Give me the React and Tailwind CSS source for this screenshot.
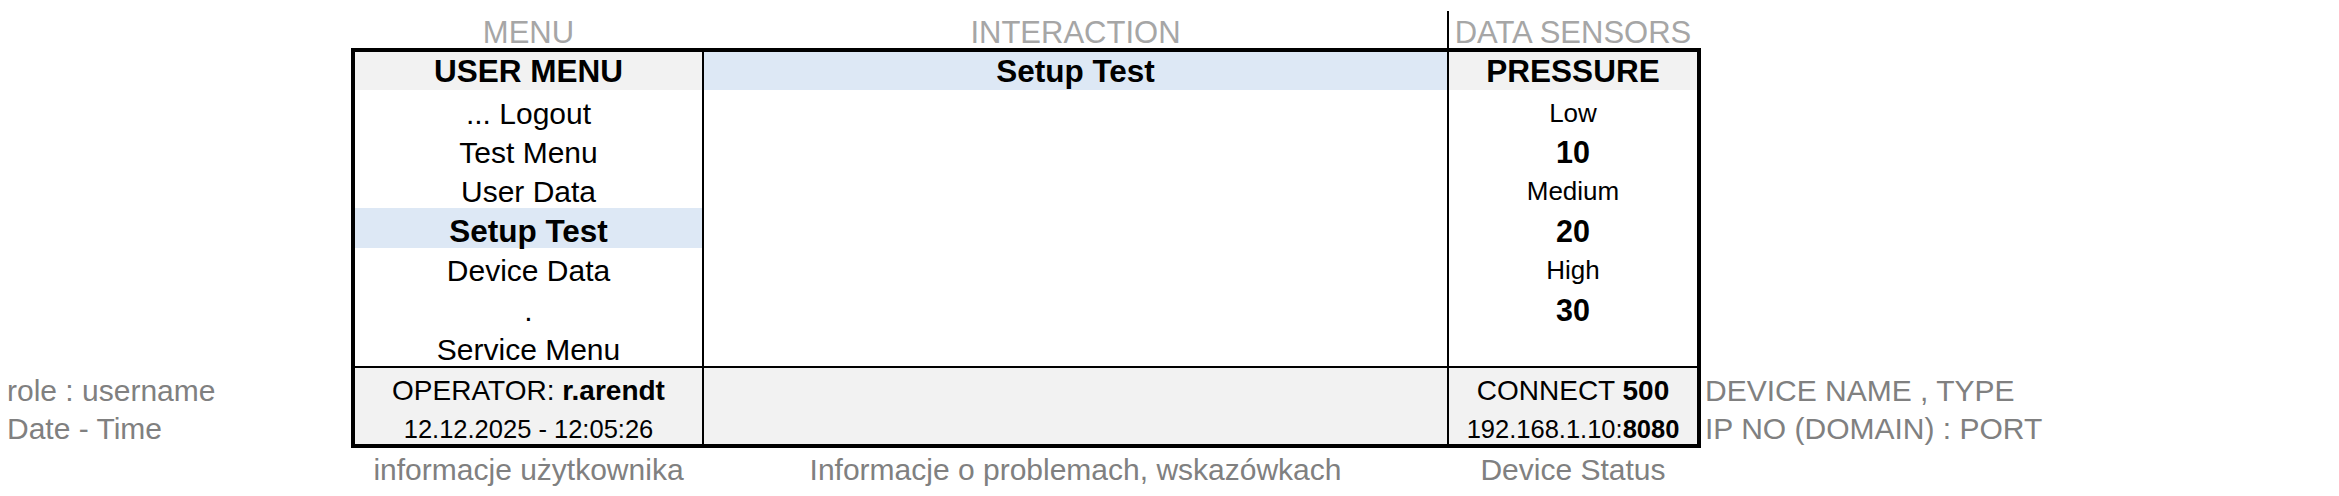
import React from 'react';

const menuItems = [
    { label: '... Logout' },
    { label: 'Test Menu' },
    { label: 'User Data' },
    { label: 'Setup Test', active: true },
    { label: 'Device Data' },
    { label: '.' },
    { label: 'Service Menu' },
];

// pressure levels, label rows are set smaller than the values
const sensorRows = [
    { text: 'Low', small: true },
    { text: '10' },
    { text: 'Medium', small: true },
    { text: '20' },
    { text: 'High', small: true },
    { text: '30' },
    { text: '' },
];

// cell text sits a little low in its row, like a spreadsheet cell
const Row = ({ children, className = '' }) => (
    <div className={`h-[39.43px] pt-[3.5px] leading-[39px] text-center whitespace-nowrap ${className}`}>{children}</div>
);

const FootRow = ({ children, className = '' }) => (
    <div className={`h-[38px] pt-[4px] leading-[38px] text-center whitespace-nowrap ${className}`}>{children}</div>
);

const SideLabel = ({ children }) => (
    <div className="h-[38px] pt-[3.5px] leading-[38px] text-[30px] text-[#808080] whitespace-nowrap">{children}</div>
);

const App = () => {
    return (
        <div className="w-[2339px] h-[496px] bg-white flex font-['Liberation_Sans',Arial,sans-serif] text-black overflow-hidden">
            {/* Left notes */}
            <div className="w-[351px] shrink-0 pt-[368px] pl-[7px]">
                <SideLabel>role : username</SideLabel>
                <SideLabel>Date - Time</SideLabel>
            </div>

            {/* Main block */}
            <div className="w-[1350px] shrink-0 flex flex-col">
                {/* Section titles */}
                <div className="h-[48px] flex items-end pl-[4px] text-[31px] text-[#a6a6a6]">
                    <div className="w-[347px] text-center leading-[30px]">MENU</div>
                    <div className="w-[745px] pl-[2px] text-center leading-[30px]">INTERACTION</div>
                    <div className="w-[250px] h-[37px] border-l-2 border-black flex items-end justify-center">
                        <span className="leading-[30px] whitespace-nowrap">DATA SENSORS</span>
                    </div>
                </div>

                {/* Panel */}
                <div className="border-4 border-black flex">
                    {/* Menu column */}
                    <div className="w-[347px] flex flex-col">
                        <div className="h-[38px] leading-[38px] text-center bg-[#f2f2f2] font-bold text-[31.5px]">USER MENU</div>
                        {menuItems.map((item) => (
                            <Row
                                key={item.label}
                                className={item.active ? 'bg-[#dde8f5] font-bold text-[31.5px]' : 'text-[30px]'}
                            >
                                {item.label}
                            </Row>
                        ))}
                        <div className="border-t-2 border-black bg-[#f2f2f2]">
                            <FootRow className="text-[28px]">
                                OPERATOR: <span className="font-bold">r.arendt</span>
                            </FootRow>
                            <FootRow className="text-[25.5px]">12.12.2025 - 12:05:26</FootRow>
                        </div>
                    </div>

                    {/* Interaction column */}
                    <div className="w-[745px] border-l-2 border-black flex flex-col">
                        <div className="h-[38px] leading-[38px] text-center bg-[#dde8f5] font-bold text-[31.5px]">Setup Test</div>
                        <div className="h-[276px]" />
                        <div className="border-t-2 border-black bg-[#f2f2f2] h-[78px]" />
                    </div>

                    {/* Sensors column */}
                    <div className="w-[250px] border-l-2 border-black flex flex-col">
                        <div className="h-[38px] leading-[38px] text-center bg-[#f2f2f2] font-bold text-[31.5px]">PRESSURE</div>
                        {sensorRows.map((r, i) => (
                            <Row key={i} className={r.small ? 'text-[26px]' : 'text-[30.5px] font-bold'}>
                                {r.text}
                            </Row>
                        ))}
                        <div className="border-t-2 border-black bg-[#f2f2f2]">
                            <FootRow className="text-[28px]">
                                CONNECT <span className="font-bold">500</span>
                            </FootRow>
                            <FootRow className="text-[25.5px]">
                                192.168.1.10:<span className="font-bold">8080</span>
                            </FootRow>
                        </div>
                    </div>
                </div>

                {/* Captions */}
                <div className="flex pl-[4px] pt-[2px] text-[30px] text-[#808080]">
                    <div className="w-[347px] text-center leading-[39px] whitespace-nowrap">informacje użytkownika</div>
                    <div className="w-[745px] pl-[2px] text-center leading-[39px] whitespace-nowrap">
                        Informacje o problemach, wskazówkach
                    </div>
                    <div className="w-[250px] pl-[2px] text-center leading-[39px] whitespace-nowrap">Device Status</div>
                </div>
            </div>

            {/* Right notes */}
            <div className="pt-[368px] pl-[4px]">
                <SideLabel>DEVICE NAME , TYPE</SideLabel>
                <SideLabel>IP NO (DOMAIN) : PORT</SideLabel>
            </div>
        </div>
    );
};

export default App;
